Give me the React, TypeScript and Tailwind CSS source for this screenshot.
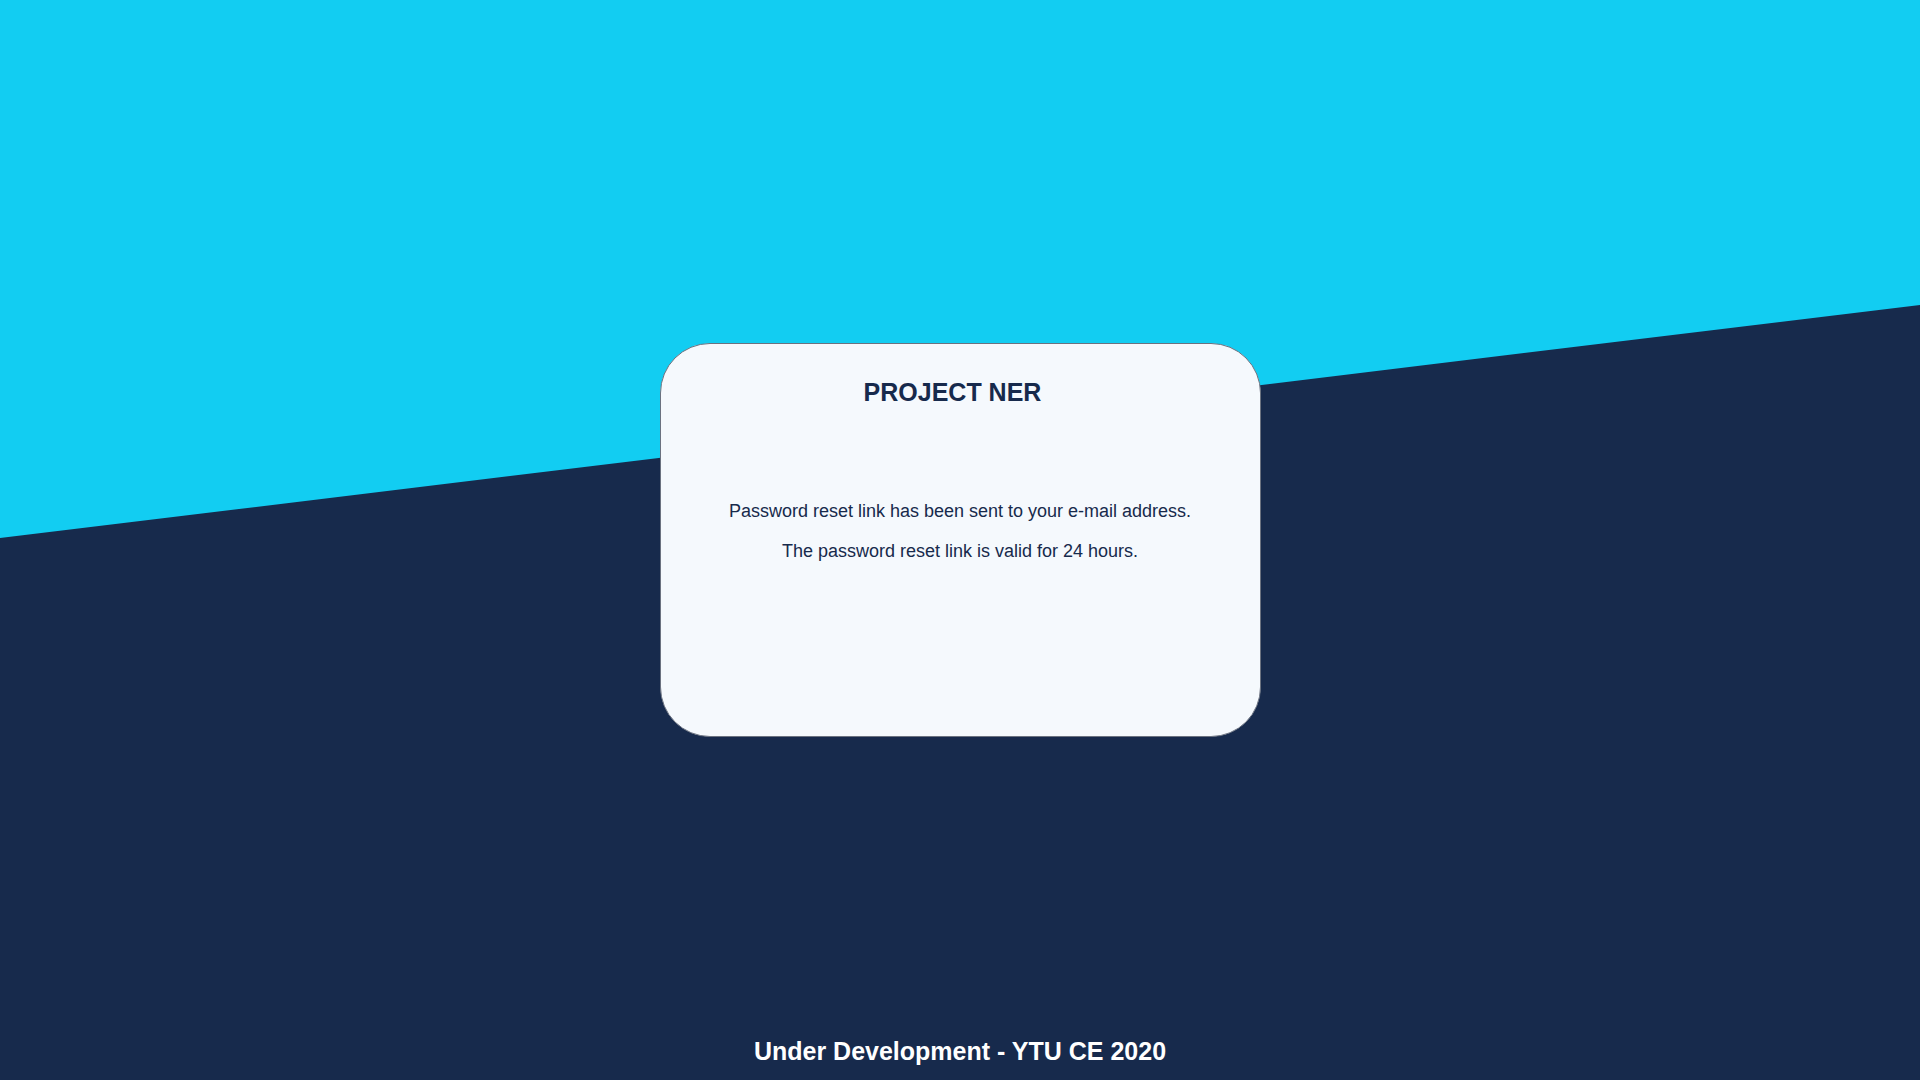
export default function App() {
  return (
    <div className="relative h-screen w-full overflow-hidden bg-[#172a4c] font-['Liberation_Sans',Arial,sans-serif]">
      {/* cyan upper wedge */}
      <div className="absolute inset-0 bg-[#12cdf2] [clip-path:polygon(0_0,100%_0,100%_305px,0_538px)]" />

      <div className="relative grid h-full grid-rows-[1fr_auto_1fr]">
        <div />
        <div className="flex justify-center">
          <div className="flex h-[394px] w-[601px] flex-col items-center rounded-[50px] border border-[#6b7280] bg-[#f5f9fd] pt-[33px] text-[#172a4c]">
            <h1 className="mr-[15px] text-[25px] font-bold leading-[30px]">PROJECT NER</h1>
            <p className="mt-[92px] text-[18px] leading-6">Password reset link has been sent to your e-mail address.</p>
            <p className="mt-4 text-[18px] leading-6">The password reset link is valid for 24 hours.</p>
          </div>
        </div>
        <div className="flex items-end justify-center pb-[15px]">
          <p className="text-[25px] font-bold leading-7 text-white">Under Development - YTU CE 2020</p>
        </div>
      </div>
    </div>
  );
}
